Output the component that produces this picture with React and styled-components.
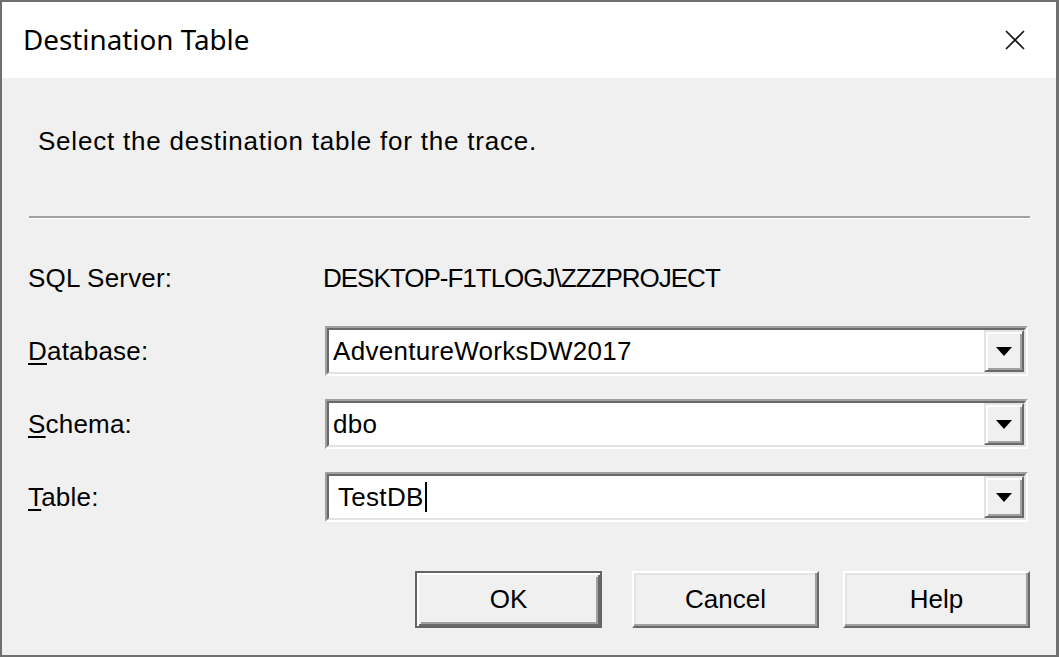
import styled, { createGlobalStyle } from 'styled-components'

const GlobalStyle = createGlobalStyle`
	html, body {
		margin: 0;
		padding: 0;
		height: 100%;
	}
	#root {
		height: 100%;
	}
	* {
		box-sizing: border-box;
	}
`

export default function App() {
	return (
		<>
			<GlobalStyle />
			<Window>
				<TitleBar>
					<Title>Destination Table</Title>
					<CloseButton aria-label="Close">
						<svg width="20" height="20" viewBox="0 0 20 20">
							<path d="M1 1 L19 19 M19 1 L1 19" stroke="#111" strokeWidth="1.6" fill="none" />
						</svg>
					</CloseButton>
				</TitleBar>

				<Content>
					<Intro>Select the destination table for the trace.</Intro>
					<Separator />

					<FormGrid>
						<Label>SQL Server:</Label>
						<ServerValue>DESKTOP-F1TLOGJ\ZZZPROJECT</ServerValue>

						<Label><u>D</u>atabase:</Label>
						<Combo value="AdventureWorksDW2017" />

						<Label><u>S</u>chema:</Label>
						<Combo value="dbo" />

						<Label><u>T</u>able:</Label>
						<Combo value="TestDB" $editable />
					</FormGrid>

					<ButtonRow>
						<DialogButton $default>OK</DialogButton>
						<DialogButton>Cancel</DialogButton>
						<DialogButton>Help</DialogButton>
					</ButtonRow>
				</Content>
			</Window>
		</>
	)
}

function Combo({ value, $editable }) {
	return (
		<ComboOuter>
			<ComboInner>
				<ComboText $editable={$editable}>
					{value}
					{$editable && <Caret />}
				</ComboText>
				<DropButton>
					<svg width="16" height="9" viewBox="0 0 16 9">
						<polygon points="0,0 16,0 8,9" fill="#000" />
					</svg>
				</DropButton>
			</ComboInner>
		</ComboOuter>
	)
}

const Window = styled.div`
	height: 100%;
	display: flex;
	flex-direction: column;
	background-color: #f0f0f0;
	border: 2px solid #6f6f6f;
	border-right-width: 3px;
	font-family: "Liberation Sans", Arial, sans-serif;
	color: #000;
`

const TitleBar = styled.div`
	height: 76px;
	flex-shrink: 0;
	background-color: #fff;
	display: flex;
	align-items: center;
	justify-content: space-between;
	padding: 0 31px 0 21px;
`

const Title = styled.h1`
	margin: 0;
	font-family: "Noto Sans", "Open Sans", sans-serif;
	font-weight: normal;
	font-size: 27.8px;
	line-height: 1;
	color: #000;
`

const CloseButton = styled.div`
	width: 20px;
	height: 20px;
	display: flex;
`

const Content = styled.div`
	flex: 1;
	display: flex;
	flex-direction: column;
	padding: 0 26px;
`

const Intro = styled.p`
	margin: 48px 0 0 10px;
	font-size: 26px;
	line-height: 30px;
	letter-spacing: 0.78px;
`

const Separator = styled.hr`
	margin: 60px 0 0 1px;
	height: 0;
	border: none;
	border-top: 2px solid #a0a0a0;
	border-bottom: 1px solid #fff;
`

const FormGrid = styled.div`
	margin-top: 34px;
	display: grid;
	grid-template-columns: 297px 1fr;
	grid-auto-rows: 50px;
	row-gap: 23px;
	align-items: center;
`

const Label = styled.div`
	font-size: 26px;
	line-height: 30px;
	letter-spacing: 0.2px;

	u {
		text-decoration-thickness: 2px;
		text-underline-offset: 3px;
	}
`

const ServerValue = styled.div`
	margin-left: -2px;
	font-size: 26px;
	line-height: 30px;
	letter-spacing: -1px;
`

const ComboOuter = styled.div`
	height: 50px;
	margin-right: 2px;
	border: 2px solid;
	border-color: #a0a0a0 #fff #fff #a0a0a0;
`

const ComboInner = styled.div`
	height: 100%;
	display: flex;
	background-color: #fff;
	border: 2px solid;
	border-color: #696969 #e3e3e3 #e3e3e3 #696969;
`

const ComboText = styled.div`
	flex: 1;
	display: flex;
	align-items: center;
	padding-left: ${p => (p.$editable ? '9px' : '4px')};
	font-size: 26px;
	letter-spacing: 0.3px;
	white-space: nowrap;
`

const Caret = styled.span`
	display: inline-block;
	width: 2px;
	height: 30px;
	margin-left: 1px;
	background-color: #000;
`

const DropButton = styled.div`
	width: 40px;
	display: flex;
	align-items: center;
	justify-content: center;
	background-color: #f0f0f0;
	border: 2px solid;
	border-color: #e3e3e3 #696969 #696969 #e3e3e3;
	box-shadow: inset 2px 2px #fff, inset -2px -2px #a0a0a0;
`

const ButtonRow = styled.div`
	margin-top: 49px;
	display: flex;
	justify-content: flex-end;
	gap: 24px;
`

const DialogButton = styled.button`
	width: 187px;
	height: 57px;
	margin-right: ${p => (p.$default ? '6px' : '0')};
	padding: 0;
	font-family: "Liberation Sans", Arial, sans-serif;
	font-size: 26px;
	color: #000;
	background-color: #f0f0f0;
	border: 2px solid;
	border-color: ${p => (p.$default ? '#646464' : '#fff #696969 #696969 #fff')};
	box-shadow: ${p => (p.$default
		? 'inset 2px 2px #fff, inset -2px -2px #696969, inset 4px 4px #f0f0f0, inset -4px -4px #a0a0a0'
		: 'inset -2px -2px #a0a0a0, inset 2px 2px #e3e3e3')};
`
